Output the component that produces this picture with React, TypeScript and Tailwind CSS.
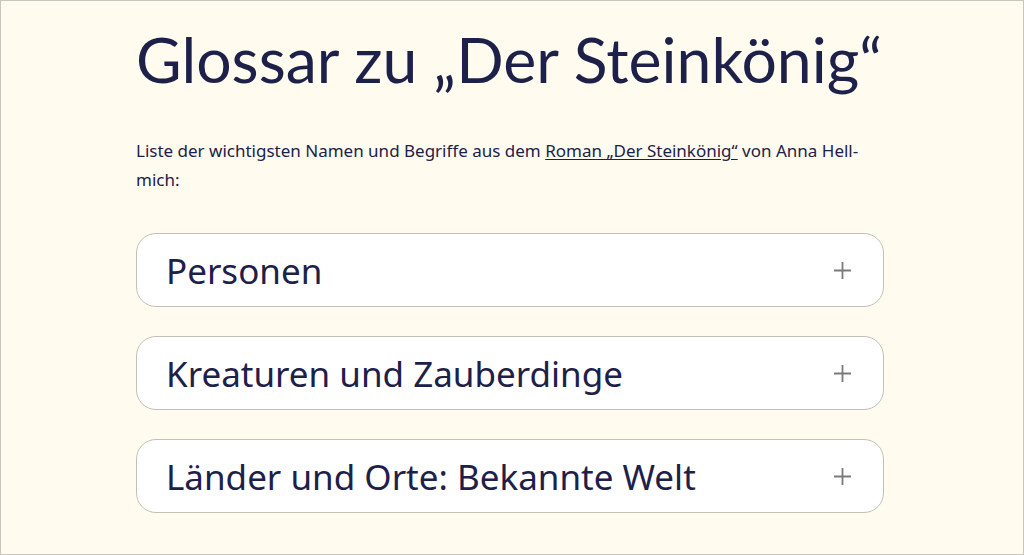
import React from 'react';

const sections = ['Personen', 'Kreaturen und Zauberdinge', 'Länder und Orte: Bekannte Welt'];

const PlusIcon = () => (
  <svg width="19" height="19" viewBox="0 0 19 19" fill="none" stroke="#7a7a7a" strokeWidth="1.8">
    <path d="M9.5 1v17M1 9.5h17" />
  </svg>
);

export default function App() {
  return (
    <div
      className="h-[555px] w-[1024px] overflow-hidden border border-[#c9c6bf] bg-[#fffbef] text-[#1d2149]"
      style={{ fontFamily: '"Noto Sans", sans-serif' }}
    >
      <div className="ml-[135px] w-[748px] pt-[20px]">
        <h1
          className="whitespace-nowrap text-[62.5px] leading-[76px] font-normal"
          style={{ fontFamily: 'Lato, sans-serif' }}
        >
          Glossar zu „Der Steinkönig“
        </h1>
        <p className="mt-[39px] text-[17px] leading-[29px]">
          Liste der wichtigsten Namen und Begriffe aus dem{' '}
          <a href="#" className="underline underline-offset-2">Roman „Der Steinkönig“</a> von Anna Hell-
          <br />
          mich:
        </p>
        <div className="mt-[39px] flex flex-col gap-[29px]">
          {sections.map((s) => (
            <div
              key={s}
              className="flex h-[74px] items-center justify-between rounded-[20px] border border-[#c3c0b8] bg-white pl-[29px] pr-[31px]"
            >
              <span className="text-[35px] leading-none">{s}</span>
              <PlusIcon />
            </div>
          ))}
        </div>
      </div>
    </div>
  );
}
